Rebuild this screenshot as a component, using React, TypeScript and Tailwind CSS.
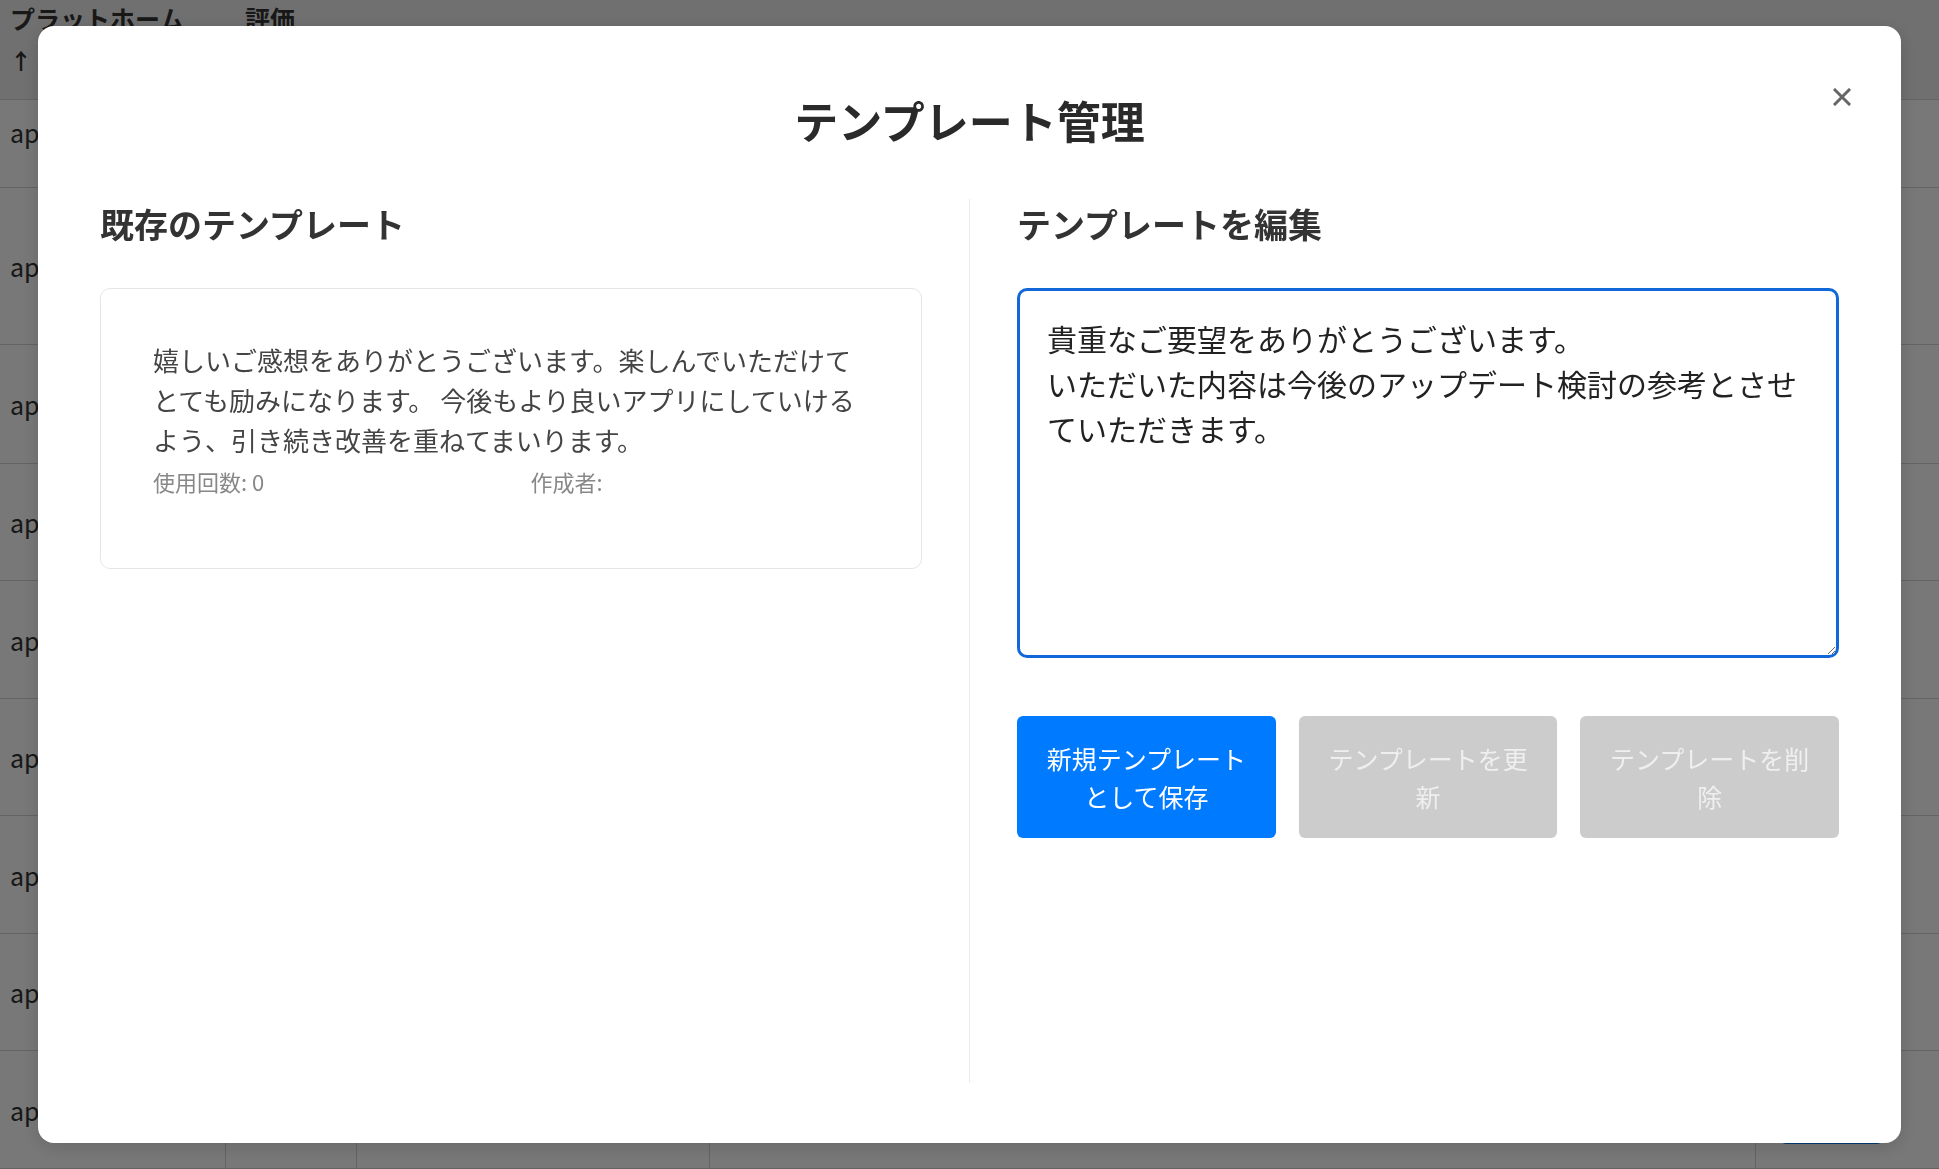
import { useState } from 'react';

// Rows of the list page that sits behind the dialog
const rowHeights = [88, 157, 119, 117, 118, 117, 118, 117, 118];

function BackgroundTable() {
  return (
    <div className="w-full text-[#333]">
      <div className="grid h-[100px] grid-cols-[226px_131px_353px_1046px_1fr] border-b border-[#d4d4d4] bg-[#eeeeee]">
        <div className="flex flex-col gap-[5px] pl-[10px]">
          <span className="whitespace-nowrap text-[25px] font-bold leading-[36px]">プラットホーム</span>
          <span className="text-[22px] font-bold leading-[36px]">↑↓</span>
        </div>
        <div className="pl-[19px]">
          <span className="text-[25px] font-bold leading-[36px]">評価</span>
        </div>
        <div />
        <div />
        <div />
      </div>
      {rowHeights.map((h, i) => (
        <div
          key={i}
          className="grid grid-cols-[226px_131px_353px_1046px_1fr] border-b border-[#d4d4d4]"
          style={{ height: h }}
        >
          <div
            className={`flex border-r border-[#d4d4d4] pl-[10px] text-[25px] leading-[36px] ${
              i === 0 ? 'items-start pt-[14px]' : 'items-center'
            }`}
          >
            app
          </div>
          <div className="border-r border-[#d4d4d4]" />
          <div className="border-r border-[#d4d4d4]" />
          <div className="border-r border-[#d4d4d4]" />
          <div className="flex items-end pb-[24px] pl-[24px]">
            {i === rowHeights.length - 1 && (
              <div className="h-[46px] w-[103px] rounded-md bg-[#007bff]" />
            )}
          </div>
        </div>
      ))}
      <div className="grid h-[40px] grid-cols-[226px_131px_353px_1046px_1fr]">
        <div className="border-r border-[#d4d4d4]" />
        <div className="border-r border-[#d4d4d4]" />
        <div className="border-r border-[#d4d4d4]" />
        <div className="border-r border-[#d4d4d4]" />
        <div />
      </div>
    </div>
  );
}

export default function App() {
  const [text, setText] = useState(
    '貴重なご要望をありがとうございます。\nいただいた内容は今後のアップデート検討の参考とさせていただきます。'
  );

  return (
    <div className="relative h-[1169px] w-full overflow-hidden bg-white font-['Noto_Sans_CJK_JP','Noto_Sans',sans-serif]">
      <BackgroundTable />

      <div className="fixed inset-0 flex items-center justify-center bg-black/[0.53]">
        <div className="relative flex h-[1117px] w-[1863px] flex-col rounded-[16px] bg-white px-[62px] pb-[60px] pt-[62px] shadow-[0_4px_20px_rgba(0,0,0,0.15)]">
          <button className="absolute right-[50px] top-[62px] flex h-[18px] w-[18px] items-center justify-center text-[#666]">
            <svg viewBox="0 0 18 18" width="18" height="18" fill="none" stroke="currentColor" strokeWidth="3" strokeLinecap="square">
              <path d="M2 2 L16 16 M16 2 L2 16" />
            </svg>
          </button>

          <h2 className="text-center text-[44px] font-semibold leading-[64px] text-[#2a2a2a]">テンプレート管理</h2>

          <div className="mt-[47px] flex min-h-0 flex-1">
            {/* existing templates */}
            <div className="flex-1 border-r border-[#ececec] pr-[47px]">
              <h3 className="text-[34px] font-bold leading-[50px] text-[#333]">既存のテンプレート</h3>
              <div className="mt-[39px] rounded-[10px] border border-[#e6e6e6] px-[52px] pb-[70px] pt-[51px]">
                <p className="text-[26px] leading-[40px] text-[#444]">
                  嬉しいご感想をありがとうございます。楽しんでいただけてとても励みになります。 今後もより良いアプリにしていけるよう、引き続き改善を重ねてまいります。
                </p>
                <div className="mt-[5px] flex justify-between text-[22px] leading-[33px] text-[#888]">
                  <span>使用回数: 0</span>
                  <span>作成者: </span>
                  <span />
                </div>
              </div>
            </div>

            {/* editor */}
            <div className="flex flex-1 flex-col pl-[47px]">
              <h3 className="text-[34px] font-bold leading-[50px] text-[#333]">テンプレートを編集</h3>
              <textarea
                value={text}
                onChange={(e) => setText(e.target.value)}
                className="mt-[39px] h-[370px] w-full rounded-[10px] border-[3px] border-[#1268d8] px-[27px] pt-[25px] text-[30px] leading-[45px] text-[#222] outline-none"
              />
              <div className="mt-[58px] flex gap-[23px]">
                <button className="flex-1 rounded-md bg-[#007bff] px-[25px] py-[23px] text-[25px] leading-[38px] text-white">
                  新規テンプレートとして保存
                </button>
                <button className="flex-1 rounded-md bg-[#cccccc] px-[25px] py-[23px] text-[25px] leading-[38px] text-[#efefef]">
                  テンプレートを更新
                </button>
                <button className="flex-1 rounded-md bg-[#cccccc] px-[25px] py-[23px] text-[25px] leading-[38px] text-[#efefef]">
                  テンプレートを削除
                </button>
              </div>
            </div>
          </div>
        </div>
      </div>
    </div>
  );
}
